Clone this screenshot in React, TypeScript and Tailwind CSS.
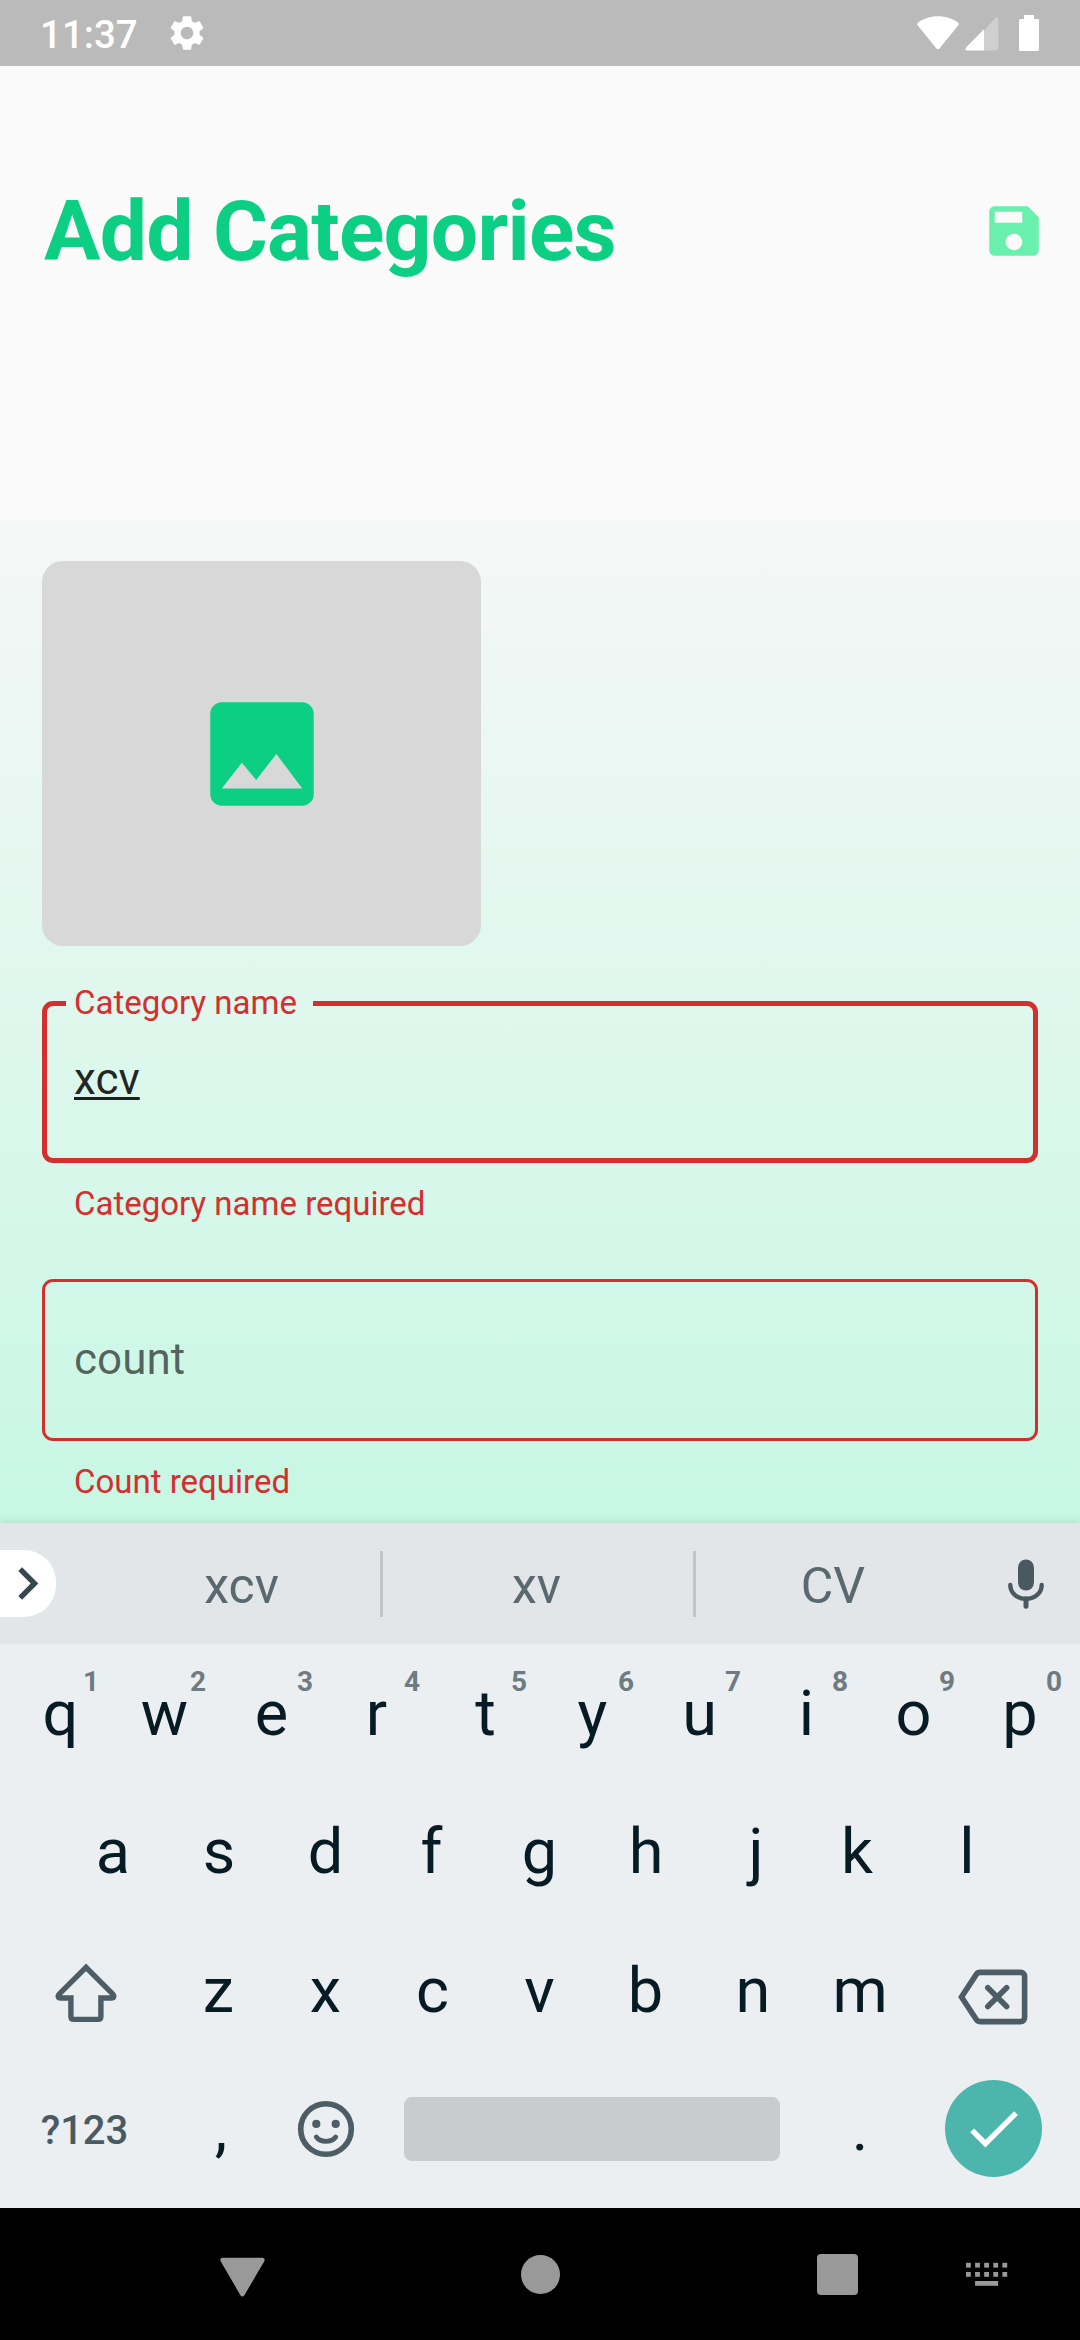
import type { ReactNode } from "react";
import { MdCheck, MdChevronRight, MdImage, MdSave, MdSettings } from "react-icons/md";

function StatusBar() {
  return (
    <div className="flex h-[66px] shrink-0 items-center bg-[#bababa] pr-[41px] pl-[40px] text-white">
      <span className="w-[98px] pt-[4px] text-[38.5px] leading-[44px] font-medium">11:37</span>
      <MdSettings className="ml-[28px] size-[42px]" />
      <svg className="ml-auto h-[34px] w-[42px]" viewBox="0 0 42 34" fill="currentColor">
        <path d="M21 0.3C13.2 0.3 6.2 2.8 0.8 6.8C0 7.4 0 8.4 0.6 9.2L19.4 32.6C20.2 33.6 21.6 33.6 22.4 32.6L41.4 9.2C42 8.4 42 7.4 41.2 6.8C35.8 2.8 28.8 0.3 21 0.3Z" />
      </svg>
      <svg className="mt-[1px] ml-[6px] size-[34px]" viewBox="0 0 34 34" fill="currentColor">
        <path opacity="0.3" d="M19 13.4V33.5H31.4C32.6 33.5 33.4 32.7 33.4 31.5V2C33.4 0.4 31.6 -0.4 30.4 0.8Z" />
        <path d="M19 12.2L1 30.6C-0.2 31.8 0.4 33.5 2 33.5H19Z" />
      </svg>
      <svg className="ml-[20px] h-[36px] w-[20px]" viewBox="0 0 20 36" fill="currentColor">
        <path d="M5 0H15V4H18.4C19.3 4 20 4.7 20 5.6V34.4C20 35.3 19.3 36 18.4 36H1.6C0.7 36 0 35.3 0 34.4V5.6C0 4.7 0.7 4 1.6 4H5Z" />
      </svg>
    </div>
  );
}

function Header() {
  return (
    <header className="h-[454px] shrink-0 bg-[#fafafa]">
      <div className="flex h-[330px] items-center justify-between pr-[33px] pl-[44px]">
        <h1 className="pt-[2px] text-[84px] leading-[98px] font-bold tracking-[-0.75px] text-[#0dcf84]">
          Add Categories
        </h1>
        <MdSave className="size-[66px] text-[#69f0ae]" />
      </div>
    </header>
  );
}

function HelperText({ children }: { children: ReactNode }) {
  return <p className="pl-[32px] text-[33px] leading-[38px] text-[#d32f2f]">{children}</p>;
}

function CategoryForm() {
  return (
    <main className="h-[1003px] shrink-0 bg-linear-to-b from-[#f5f7f7] to-[#c7f7e4] px-[42px] pt-[41px]">
      <div className="flex h-[385px] w-[439px] items-center justify-center rounded-[21px] bg-[#d8d8d8]">
        <MdImage className="size-[138px] text-[#0dcf84]" />
      </div>
      <fieldset className="mt-[55px] h-[162px] rounded-[11px] border-[5px] border-[#d32f2f] pl-[19px]">
        <legend className="h-[5px] w-[247px] pl-[8px] text-[33px] leading-[3px] whitespace-nowrap text-[#d32f2f]">
          Category name
        </legend>
        <div className="ml-[8px] w-fit pt-[47px] text-[44px] leading-[52px] text-black/87">
          <span className="underline decoration-[2.5px] underline-offset-[3px] [text-decoration-skip-ink:none]">xcv</span>
        </div>
      </fieldset>
      <div className="pt-[22px]">
        <HelperText>Category name required</HelperText>
      </div>
      <div className="mt-[56px] flex h-[162px] items-center rounded-[11px] border-[3px] border-[#d32f2f] pb-[2px] pl-[29px]">
        <span className="text-[44px] leading-[52px] text-black/60">count</span>
      </div>
      <div className="pt-[22px]">
        <HelperText>Count required</HelperText>
      </div>
    </main>
  );
}

function SuggestionBar() {
  return (
    <div className="relative flex h-[121px] shrink-0 items-center bg-[#e2e6e9] text-[50px] leading-[58px] text-[#5a686f] shadow-[0_0_8px_rgba(0,0,0,0.14)]">
      <div className="flex h-[67px] w-[56px] items-center rounded-r-[32px] bg-white">
        <MdChevronRight className="-ml-[5px] size-[65px] shrink-0 text-[#37474f]" />
      </div>
      <span className="ml-[47px] w-[277px] pt-[5px] text-center">xcv</span>
      <span className="h-[66px] w-[3px] bg-[#c1c5c8]" />
      <span className="w-[310px] pt-[5px] pr-[3px] text-center">xv</span>
      <span className="h-[66px] w-[3px] bg-[#c1c5c8]" />
      <span className="w-[274px] pt-[5px] text-center">CV</span>
      <svg className="ml-[38px] h-[50px] w-[36px]" viewBox="0 0 36 50" fill="none" stroke="#4a5960" strokeWidth="4.4" strokeLinecap="round">
        <rect x="10" y="0.5" width="16" height="31" rx="8" fill="#4a5960" stroke="none" />
        <path d="M2.3 26C2.3 34 9 39.8 18 39.8S33.7 34 33.7 26" />
        <path d="M18 40V47.3" strokeWidth="5" />
      </svg>
    </div>
  );
}

// Per-glyph nudges that centre the ink of a letter, rather than its advance box, on the key.
const opticalShift: Record<string, number> = {
  q: 3, r: -2, p: -0.5,
  a: 1.5, s: 0.5, f: -1, h: -0.5, j: 2.5, k: -3.5, l: -0.5,
  b: -1, n: -0.5, m: -0.5,
  ",": 2.5, ".": 1.5,
};

function Key({ label, hint }: { label: string; hint?: string }) {
  return (
    <div className="relative flex h-full w-[107px] shrink-0 items-center justify-center">
      <span style={{ transform: `translateX(${opticalShift[label] ?? 0}px)` }}>{label}</span>
      {hint && (
        <span className="absolute top-[24px] left-[77px] w-[20px] text-center text-[28px] leading-[28px] font-bold text-[#6e7b81]">
          {hint}
        </span>
      )}
    </div>
  );
}

const topRow = ["q", "w", "e", "r", "t", "y", "u", "i", "o", "p"];
const homeRow = ["a", "s", "d", "f", "g", "h", "j", "k", "l"];
const bottomRow = ["z", "x", "c", "v", "b", "n", "m"];

function Keyboard() {
  return (
    <div className="relative h-[564px] shrink-0 bg-[#ebeff2] text-[63px] leading-[74px] text-[#061b24]">
      <div className="flex h-[139px] pl-1">
        {topRow.map((key, i) => (
          <Key key={key} label={key} hint={String((i + 1) % 10)} />
        ))}
      </div>
      <div className="flex h-[138px] pl-[58px]">
        {homeRow.map((key) => (
          <Key key={key} label={key} />
        ))}
      </div>
      <div className="flex h-[139px] pl-1">
        <div className="flex w-[161px] items-center justify-center pt-[5px] pl-[2px]">
          <svg className="h-[60px] w-[62px]" viewBox="0 0 62 60" fill="none" stroke="#4d5d65" strokeWidth="5.4">
            <path d="M31 4.4L4.4 30.9C2.4 32.9 3 35 5.6 35H15.9V53.6C15.9 55.4 16.8 56.4 18.6 56.4H43.2C45 56.4 45.9 55.4 45.9 53.6V35H56.4C59 35 59.6 32.9 57.6 30.9Z" />
          </svg>
        </div>
        {bottomRow.map((key) => (
          <Key key={key} label={key} />
        ))}
        <div className="flex w-[160px] items-center justify-center pt-[12px] pr-[2px]">
          <svg className="h-[56px] w-[70px]" viewBox="0 0 70 56" fill="none" stroke="#4d5d65" strokeWidth="5.6">
            <path d="M22 3.4H62.4C65 3.4 66.6 5 66.6 7.6V48.4C66.6 51 65 52.6 62.4 52.6H22C20.4 52.6 19.2 52 18.3 50.6L3.5 28L18.3 5.4C19.2 4 20.4 3.4 22 3.4Z" />
            <path d="M29.8 18.8L48.6 37.6M48.6 18.8L29.8 37.6" strokeLinecap="round" />
          </svg>
        </div>
      </div>
      <div className="flex h-[138px] items-center pl-1">
        <span className="w-[161px] pt-[3px] text-center text-[40px] font-medium text-[#4a5a62]">?123</span>
        <Key label="," />
        <div className="flex w-[107px] justify-center">
          <svg className="size-[58px]" viewBox="0 0 58 58" fill="none" stroke="#4d5d65">
            <circle cx="29" cy="29" r="25.3" strokeWidth="5.6" />
            <circle cx="19.3" cy="23.9" r="4.1" fill="#4d5d65" stroke="none" />
            <circle cx="38.7" cy="23.9" r="4.1" fill="#4d5d65" stroke="none" />
            <path d="M19.3 37C23.5 42.7 34.5 42.7 38.7 37" strokeWidth="4.8" strokeLinecap="round" />
          </svg>
        </div>
        <div className="mx-[25px] h-[64px] w-[376px] rounded-[8px] bg-[#c8cccf]" />
        <Key label="." />
        <div className="mb-px ml-[33px] flex size-[97px] items-center justify-center rounded-full bg-[#4db6ac]">
          <MdCheck className="size-[65px] text-white" />
        </div>
      </div>
    </div>
  );
}

const dotColumns = [0, 9.1, 18.2, 27.3, 36.4];

function NavigationBar() {
  return (
    <nav className="flex h-[132px] shrink-0 items-center bg-black pl-[220px] text-[#999999]">
      <svg className="mt-[5px] h-[40px] w-[45px]" viewBox="0 0 45 40" fill="currentColor">
        <path d="M2.8 0.8H42.2C44.4 0.8 45.2 2.6 44.2 4.4L24.4 38.2C23.5 39.8 21.3 39.8 20.4 38.2L0.8 4.4C-0.2 2.6 0.6 0.8 2.8 0.8Z" />
      </svg>
      <span className="mt-px ml-[256px] size-[39px] rounded-full bg-[#999999]" />
      <span className="mt-px ml-[257px] size-[41px] rounded-[4px] bg-[#999999]" />
      <svg className="ml-[108px] h-[24px] w-[42px]" viewBox="0 0 42 24" fill="currentColor">
        {dotColumns.map((x) => (
          <g key={x}>
            <rect x={x} y="0.8" width="4.8" height="4.8" />
            <rect x={x} y="10" width="4.8" height="4.8" />
          </g>
        ))}
        <rect x="9.1" y="19" width="23" height="4.8" />
      </svg>
    </nav>
  );
}

export default function App() {
  return (
    <div className="flex h-[2340px] w-[1080px] flex-col overflow-hidden font-[Roboto,sans-serif]">
      <StatusBar />
      <Header />
      <CategoryForm />
      <SuggestionBar />
      <Keyboard />
      <NavigationBar />
    </div>
  );
}
